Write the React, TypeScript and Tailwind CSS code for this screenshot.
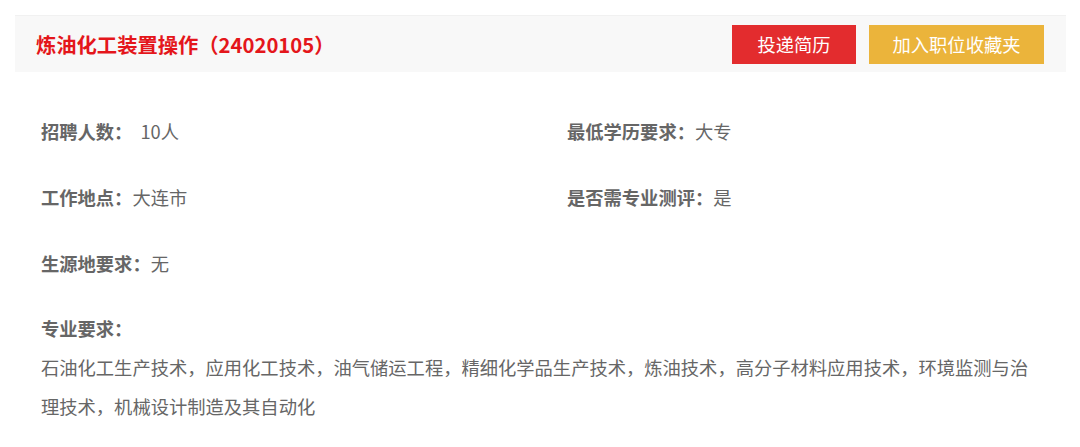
const cjk = "font-['Microsoft_YaHei','Noto_Sans_CJK_SC',sans-serif]"

interface Field {
  label: string
  value: string
  gap?: boolean
}

const rows: [Field, Field | null][] = [
  [{ label: "招聘人数：", value: "10人", gap: true }, { label: "最低学历要求：", value: "大专" }],
  [{ label: "工作地点：", value: "大连市" }, { label: "是否需专业测评：", value: "是" }],
  [{ label: "生源地要求：", value: "无" }, null],
]

function Item({ field }: { field: Field | null }) {
  if (!field) return <div />
  return (
    <div className="flex items-center h-[66px] text-[18.3px] text-[#666]">
      <span className="font-bold">{field.label}</span>
      <span className={field.gap ? "ml-[8px]" : ""}>{field.value}</span>
    </div>
  )
}

export default function App() {
  return (
    <main className={`${cjk} bg-white w-[1080px] h-[447px] overflow-hidden pt-[15px] pl-[15px] pr-[14px]`}>
      <div className="h-[57px] bg-[#f8f8f8] border-t border-[#f1f1f1] flex items-center justify-between pl-[21px] pr-[22px]">
        <h1 className="text-[20.3px] font-bold text-[#e4161b] leading-none">炼油化工装置操作（24020105）</h1>
        <div className="flex gap-[13px]">
          <button className="w-[124px] h-[39px] bg-[#e32c2e] text-white text-[18.3px] leading-none">投递简历</button>
          <button className="w-[175px] h-[39px] bg-[#ebb43b] text-white text-[18.3px] leading-none">加入职位收藏夹</button>
        </div>
      </div>

      <div className="px-[26px] pt-[27px]">
        <div className="grid grid-cols-[526px_1fr]">
          {rows.map(([a, b], i) => (
            <div key={i} className="contents">
              <Item field={a} />
              <Item field={b} />
            </div>
          ))}
        </div>

        <div className="mt-[11px] text-[18.3px] text-[#666]">
          <div className="font-bold leading-[40px]">专业要求：</div>
          <p className="leading-[39px]">
            石油化工生产技术，应用化工技术，油气储运工程，精细化学品生产技术，炼油技术，高分子材料应用技术，环境监测与治理技术，机械设计制造及其自动化
          </p>
        </div>
      </div>
    </main>
  )
}
